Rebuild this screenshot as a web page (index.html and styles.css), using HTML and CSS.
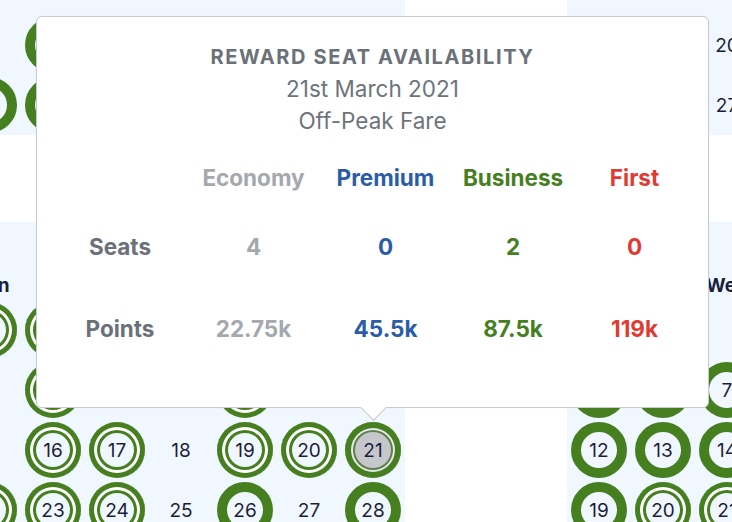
FILE: index.html
```html
<!DOCTYPE html>
<html>
<head>
<meta charset="utf-8">
<link rel="stylesheet" href="styles.css">
</head>
<body>
<div class="months">
  <section class="month">
    <div class="month-title">December 2020</div>
    <div class="weekdays"><span>Mon</span><span>Tue</span><span>Wed</span><span>Thu</span><span>Fri</span><span>Sat</span><span>Sun</span></div>
    <div class="week"><div class="day"></div><div class="day"><span class="c">1</span></div><div class="day"><span class="c">2</span></div><div class="day"><span class="c">3</span></div><div class="day"><span class="c">4</span></div><div class="day"><span class="c">5</span></div><div class="day"><span class="c">6</span></div></div>
    <div class="week"><div class="day"><span class="c">7</span></div><div class="day"><span class="c">8</span></div><div class="day"><span class="c">9</span></div><div class="day"><span class="c">10</span></div><div class="day"><span class="c">11</span></div><div class="day"><span class="c">12</span></div><div class="day"><span class="c">13</span></div></div>
    <div class="week"><div class="day"><span class="c">14</span></div><div class="day"><span class="c">15</span></div><div class="day"><span class="c">16</span></div><div class="day"><span class="c">17</span></div><div class="day"><span class="c">18</span></div><div class="day"><span class="c">19</span></div><div class="day"><span class="c">20</span></div></div>
    <div class="week"><div class="day"><span class="c">21</span></div><div class="day thick"><span class="c">22</span></div><div class="day thick"><span class="c">23</span></div><div class="day"><span class="c">24</span></div><div class="day"><span class="c">25</span></div><div class="day thick"><span class="c">26</span></div><div class="day thick"><span class="c">27</span></div></div>
    <div class="week"><div class="day thick"><span class="c">28</span></div><div class="day thick"><span class="c">29</span></div><div class="day thick"><span class="c">30</span></div><div class="day"><span class="c">31</span></div><div class="day"></div><div class="day"></div><div class="day"></div></div>
  </section>
  <section class="month">
    <div class="month-title">January 2021</div>
    <div class="weekdays"><span>Mon</span><span>Tue</span><span>Wed</span><span>Thu</span><span>Fri</span><span>Sat</span><span>Sun</span></div>
    <div class="week"><div class="day"></div><div class="day"></div><div class="day"></div><div class="day"></div><div class="day"><span class="c">1</span></div><div class="day"><span class="c">2</span></div><div class="day"><span class="c">3</span></div></div>
    <div class="week"><div class="day"><span class="c">4</span></div><div class="day"><span class="c">5</span></div><div class="day"><span class="c">6</span></div><div class="day"><span class="c">7</span></div><div class="day"><span class="c">8</span></div><div class="day"><span class="c">9</span></div><div class="day"><span class="c">10</span></div></div>
    <div class="week"><div class="day"><span class="c">11</span></div><div class="day"><span class="c">12</span></div><div class="day"><span class="c">13</span></div><div class="day"><span class="c">14</span></div><div class="day"><span class="c">15</span></div><div class="day"><span class="c">16</span></div><div class="day"><span class="c">17</span></div></div>
    <div class="week"><div class="day"><span class="c">18</span></div><div class="day"><span class="c">19</span></div><div class="day"><span class="c">20</span></div><div class="day"><span class="c">21</span></div><div class="day"><span class="c">22</span></div><div class="day"><span class="c">23</span></div><div class="day"><span class="c">24</span></div></div>
    <div class="week"><div class="day"><span class="c">25</span></div><div class="day"><span class="c">26</span></div><div class="day"><span class="c">27</span></div><div class="day"><span class="c">28</span></div><div class="day"><span class="c">29</span></div><div class="day"><span class="c">30</span></div><div class="day"><span class="c">31</span></div></div>
  </section>
  <section class="month">
    <div class="month-title">March 2021</div>
    <div class="weekdays"><span>Mon</span><span>Tue</span><span>Wed</span><span>Thu</span><span>Fri</span><span>Sat</span><span>Sun</span></div>
    <div class="week"><div class="day double"><span class="c">1</span></div><div class="day double"><span class="c">2</span></div><div class="day double"><span class="c">3</span></div><div class="day"><span class="c">4</span></div><div class="day double"><span class="c">5</span></div><div class="day double"><span class="c">6</span></div><div class="day"><span class="c">7</span></div></div>
    <div class="week"><div class="day"><span class="c">8</span></div><div class="day double"><span class="c">9</span></div><div class="day"><span class="c">10</span></div><div class="day"><span class="c">11</span></div><div class="day double"><span class="c">12</span></div><div class="day"><span class="c">13</span></div><div class="day"><span class="c">14</span></div></div>
    <div class="week"><div class="day"><span class="c">15</span></div><div class="day double"><span class="c">16</span></div><div class="day double"><span class="c">17</span></div><div class="day"><span class="c">18</span></div><div class="day double"><span class="c">19</span></div><div class="day double"><span class="c">20</span></div><div class="day double selected"><span class="c">21</span></div></div>
    <div class="week"><div class="day double"><span class="c">22</span></div><div class="day double"><span class="c">23</span></div><div class="day double"><span class="c">24</span></div><div class="day"><span class="c">25</span></div><div class="day thick"><span class="c">26</span></div><div class="day"><span class="c">27</span></div><div class="day thick"><span class="c">28</span></div></div>
    <div class="week"><div class="day double"><span class="c">29</span></div><div class="day double"><span class="c">30</span></div><div class="day"><span class="c">31</span></div><div class="day"></div><div class="day"></div><div class="day"></div><div class="day"></div></div>
  </section>
  <section class="month">
    <div class="month-title">April 2021</div>
    <div class="weekdays"><span>Mon</span><span>Tue</span><span>Wed</span><span>Thu</span><span>Fri</span><span>Sat</span><span>Sun</span></div>
    <div class="week"><div class="day"></div><div class="day"></div><div class="day"></div><div class="day thick"><span class="c">1</span></div><div class="day thick"><span class="c">2</span></div><div class="day"><span class="c">3</span></div><div class="day"><span class="c">4</span></div></div>
    <div class="week"><div class="day thick"><span class="c">5</span></div><div class="day thick"><span class="c">6</span></div><div class="day thick"><span class="c">7</span></div><div class="day thick"><span class="c">8</span></div><div class="day"><span class="c">9</span></div><div class="day"><span class="c">10</span></div><div class="day"><span class="c">11</span></div></div>
    <div class="week"><div class="day thick"><span class="c">12</span></div><div class="day thick"><span class="c">13</span></div><div class="day thick"><span class="c">14</span></div><div class="day thick"><span class="c">15</span></div><div class="day"><span class="c">16</span></div><div class="day"><span class="c">17</span></div><div class="day"><span class="c">18</span></div></div>
    <div class="week"><div class="day thick"><span class="c">19</span></div><div class="day double"><span class="c">20</span></div><div class="day double"><span class="c">21</span></div><div class="day double"><span class="c">22</span></div><div class="day"><span class="c">23</span></div><div class="day"><span class="c">24</span></div><div class="day"><span class="c">25</span></div></div>
    <div class="week"><div class="day"><span class="c">26</span></div><div class="day"><span class="c">27</span></div><div class="day"><span class="c">28</span></div><div class="day"><span class="c">29</span></div><div class="day"><span class="c">30</span></div><div class="day"></div><div class="day"></div></div>
  </section>
</div>

<div class="tooltip">
  <div class="tt-title">REWARD SEAT AVAILABILITY</div>
  <div class="tt-sub">21st March 2021</div>
  <div class="tt-sub">Off-Peak Fare</div>
  <div class="tt-table">
    <div class="tt-row tt-head">
      <span></span>
      <span class="economy">Economy</span>
      <span class="premium">Premium</span>
      <span class="business">Business</span>
      <span class="first">First</span>
    </div>
    <div class="tt-row tt-seats">
      <span class="label">Seats</span>
      <span class="economy">4</span>
      <span class="premium">0</span>
      <span class="business">2</span>
      <span class="first">0</span>
    </div>
    <div class="tt-row tt-points">
      <span class="label">Points</span>
      <span class="economy">22.75k</span>
      <span class="premium">45.5k</span>
      <span class="business">87.5k</span>
      <span class="first">119k</span>
    </div>
  </div>
</div>
</body>
</html>
```

FILE: styles.css
```css
* { box-sizing: border-box; }

html, body {
  margin: 0;
  padding: 0;
}

body {
  position: relative;
  width: 732px;
  height: 522px;
  overflow: hidden;
  background: #ffffff;
  font-family: Inter, "Liberation Sans", Arial, sans-serif;
  color: #1b1e3b;
}

.months {
  display: grid;
  grid-template-columns: 448px 448px;
  column-gap: 162px;
  row-gap: 87px;
  margin-left: -43px;
  margin-top: -243px;
}

.month {
  background: #f0f7ff;
  padding-top: 12px;
}

.month-title {
  height: 36px;
  line-height: 36px;
  text-align: center;
  font-size: 19px;
  font-weight: 700;
}

.weekdays {
  display: grid;
  grid-template-columns: repeat(7, 64px);
  height: 30px;
  align-items: center;
}

.weekdays span {
  text-align: center;
  font-size: 19px;
  font-weight: 700;
}

.week {
  display: grid;
  grid-template-columns: repeat(7, 64px);
  height: 60px;
}

.day {
  display: flex;
  align-items: center;
  justify-content: center;
  font-size: 19px;
}

.day .c {
  width: 56px;
  height: 56px;
  border-radius: 50%;
  display: flex;
  align-items: center;
  justify-content: center;
}

.thick .c {
  border: 10px solid #457f1f;
}

.double .c {
  box-shadow: inset 0 0 0 5px #457f1f, inset 0 0 0 8px #ffffff, inset 0 0 0 11px #457f1f;
}

.selected .c {
  background: #c6c7cc;
  box-shadow: inset 0 0 0 6px #457f1f, inset 0 0 0 8px #e6e7ea, inset 0 0 0 10px #5f7f4a;
}

/* tooltip */
.tooltip {
  position: absolute;
  left: 36px;
  top: 16px;
  width: 673px;
  height: 392px;
  background: #ffffff;
  border: 1px solid #c6c9ce;
  border-radius: 6px;
  padding: 24px 16px 0;
  text-align: center;
  box-shadow: 0 0 2px rgba(0, 0, 0, 0.06);
}

.tooltip::after {
  content: "";
  position: absolute;
  left: 327px;
  top: 381px;
  width: 18px;
  height: 18px;
  background: #ffffff;
  border-right: 1px solid #c6c9ce;
  border-bottom: 1px solid #c6c9ce;
  transform: rotate(45deg);
}

.tt-title {
  font-size: 20px;
  line-height: 32px;
  font-weight: 700;
  letter-spacing: 1.6px;
  color: #6b7178;
}

.tt-sub {
  font-size: 22.5px;
  line-height: 32px;
  color: #6e747b;
}

.tt-row {
  display: grid;
  grid-template-columns: 134px 133px 131px 124px 119px;
  font-size: 22.5px;
  line-height: 26px;
  font-weight: 700;
}

.tt-head { margin-top: 28px; }
.tt-seats { margin-top: 43px; }
.tt-points { margin-top: 56px; }

.label { color: #6b7079; }
.economy { color: #a5a8ad; }
.premium { color: #2b5ca8; }
.business { color: #467f21; }
.first { color: #e03b32; }
```
